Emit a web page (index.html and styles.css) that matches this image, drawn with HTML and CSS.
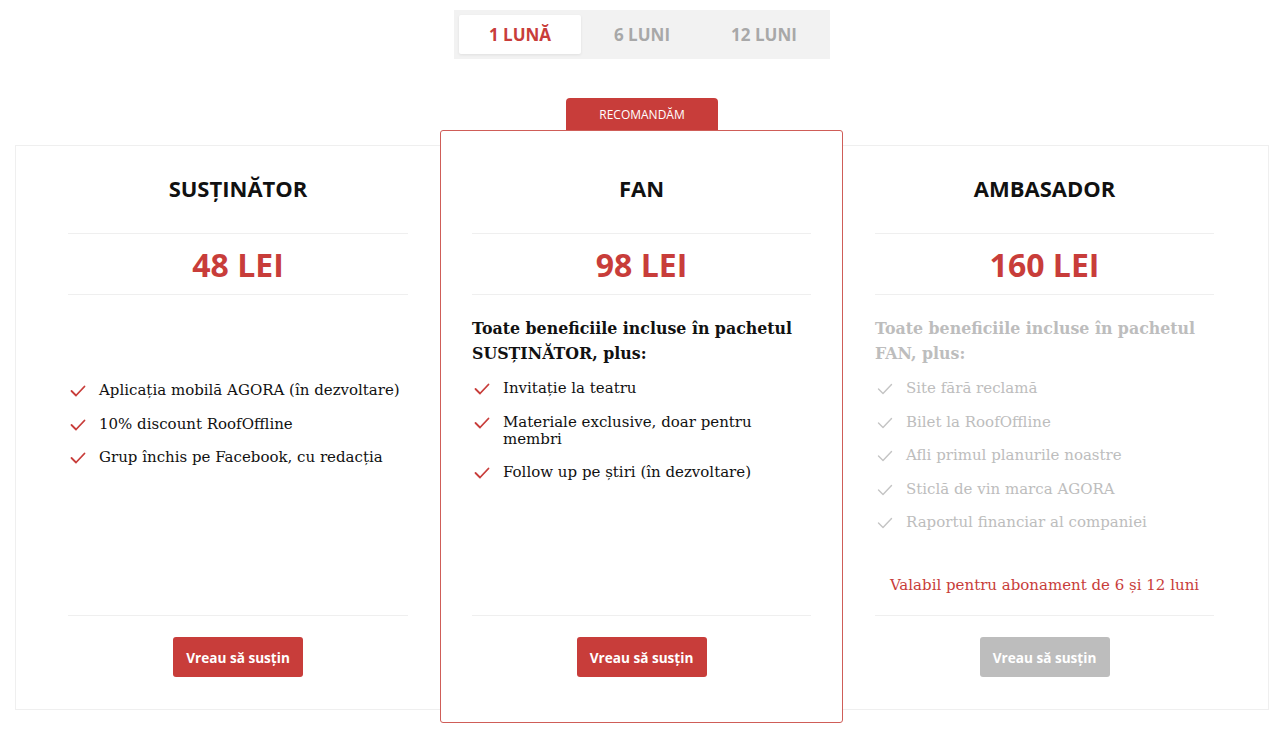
FILE: index.html
```html
<!DOCTYPE html>
<html lang="ro">
<head>
<meta charset="utf-8">
<title>Abonamente</title>
<link rel="stylesheet" href="styles.css">
</head>
<body>
<div class="tabs-wrap">
  <div class="tabs">
    <div class="tab active">1 LUNĂ</div>
    <div class="tab">6 LUNI</div>
    <div class="tab">12 LUNI</div>
  </div>
</div>

<div class="plans">
  <div class="card">
    <h2 class="title">SUSȚINĂTOR</h2>
    <div class="price">48 LEI</div>
    <div class="body">
      <ul class="list list-plain">
        <li><svg class="check" viewBox="0 0 16 12"><polyline points="1.5,6 6,10.5 14.5,1.5"/></svg>Aplicația mobilă AGORA (în dezvoltare)</li>
        <li><svg class="check" viewBox="0 0 16 12"><polyline points="1.5,6 6,10.5 14.5,1.5"/></svg>10% discount RoofOffline</li>
        <li><svg class="check" viewBox="0 0 16 12"><polyline points="1.5,6 6,10.5 14.5,1.5"/></svg>Grup închis pe Facebook, cu redacția</li>
      </ul>
    </div>
    <div class="foot"><button class="btn">Vreau să susțin</button></div>
  </div>

  <div class="card featured">
    <div class="badge">RECOMANDĂM</div>
    <h2 class="title">FAN</h2>
    <div class="price">98 LEI</div>
    <div class="body">
      <p class="intro">Toate beneficiile incluse în pachetul SUSȚINĂTOR, plus:</p>
      <ul class="list">
        <li><svg class="check" viewBox="0 0 16 12"><polyline points="1.5,6 6,10.5 14.5,1.5"/></svg>Invitație la teatru</li>
        <li><svg class="check" viewBox="0 0 16 12"><polyline points="1.5,6 6,10.5 14.5,1.5"/></svg>Materiale exclusive, doar pentru membri</li>
        <li><svg class="check" viewBox="0 0 16 12"><polyline points="1.5,6 6,10.5 14.5,1.5"/></svg>Follow up pe știri (în dezvoltare)</li>
      </ul>
    </div>
    <div class="foot"><button class="btn">Vreau să susțin</button></div>
  </div>

  <div class="card disabled">
    <h2 class="title">AMBASADOR</h2>
    <div class="price">160 LEI</div>
    <div class="body">
      <p class="intro">Toate beneficiile incluse în pachetul FAN, plus:</p>
      <ul class="list">
        <li><svg class="check" viewBox="0 0 16 12"><polyline points="1.5,6 6,10.5 14.5,1.5"/></svg>Site fără reclamă</li>
        <li><svg class="check" viewBox="0 0 16 12"><polyline points="1.5,6 6,10.5 14.5,1.5"/></svg>Bilet la RoofOffline</li>
        <li><svg class="check" viewBox="0 0 16 12"><polyline points="1.5,6 6,10.5 14.5,1.5"/></svg>Afli primul planurile noastre</li>
        <li><svg class="check" viewBox="0 0 16 12"><polyline points="1.5,6 6,10.5 14.5,1.5"/></svg>Sticlă de vin marca AGORA</li>
        <li><svg class="check" viewBox="0 0 16 12"><polyline points="1.5,6 6,10.5 14.5,1.5"/></svg>Raportul financiar al companiei</li>
      </ul>
      <p class="note">Valabil pentru abonament de 6 și 12 luni</p>
    </div>
    <div class="foot"><button class="btn btn-disabled">Vreau să susțin</button></div>
  </div>
</div>
</body>
</html>
```

FILE: styles.css
```css
* { box-sizing: border-box; }

html, body {
  min-height: 754px;
}

body {
  margin: 0;
  padding-bottom: 44px;
  background: #fff;
  font-family: "DejaVu Serif", "Liberation Serif", serif;
  color: #111;
}

.tabs-wrap {
  display: flex;
  justify-content: center;
  padding-top: 10px;
}

.tabs {
  display: flex;
  background: #f2f2f2;
  padding: 5px;
  width: 376px;
  height: 49px;
  margin-left: 4px;
}

.tab {
  width: 122px;
  height: 39px;
  display: flex;
  align-items: center;
  justify-content: center;
  font-family: "Open Sans", sans-serif;
  font-weight: 700;
  font-size: 17px;
  color: #a8a8a8;
}

.tab.active {
  background: #fff;
  color: #c83d3a;
  border-radius: 2px;
  box-shadow: 0 1px 3px rgba(0, 0, 0, 0.08);
}

.plans {
  margin: 86px 11px 0 15px;
  border: 1px solid #efefef;
  padding: 0 22px 0 20px;
  display: grid;
  grid-template-columns: 404px 403px 403px;
  align-items: start;
}

.card {
  position: relative;
  display: flex;
  flex-direction: column;
  padding: 28px 32px 32px;
  height: 563px;
}

.card.featured {
  height: 593px;
  margin: -16px 0 -14px;
  padding: 43px 31px 45px;
  border: 1px solid #cf5d58;
  border-radius: 3px;
  background: #fff;
  z-index: 1;
}

.badge {
  position: absolute;
  top: -33px;
  left: 125px;
  width: 152px;
  height: 32px;
  background: #c83d3a;
  color: #fff;
  border-radius: 4px 4px 0 0;
  font-family: "Open Sans", sans-serif;
  font-size: 12px;
  display: flex;
  align-items: center;
  justify-content: center;
}

.title {
  margin: 0;
  padding-bottom: 30px;
  border-bottom: 1px solid #efefef;
  font-family: "Open Sans", sans-serif;
  font-weight: 700;
  font-size: 22px;
  line-height: 29px;
  text-align: center;
  color: #111;
}

.price {
  height: 61px;
  line-height: 61px;
  border-bottom: 1px solid #efefef;
  font-family: "Open Sans", sans-serif;
  font-weight: 700;
  font-size: 32px;
  text-align: center;
  color: #c83d3a;
}

.body {
  flex: 1;
  display: flex;
  flex-direction: column;
  padding: 21px 0 17px;
  border-bottom: 1px solid #efefef;
}

.intro {
  margin: 0 0 14px;
  font-weight: 700;
  font-size: 15.8px;
  line-height: 25px;
  color: #111;
}

.list {
  list-style: none;
  margin: 0;
  padding: 0;
}

.list-plain {
  margin-top: 66px;
}

.list li {
  position: relative;
  padding-left: 31px;
  font-size: 15px;
  line-height: 17px;
  margin-bottom: 16.5px;
  color: #111;
}

.check {
  position: absolute;
  left: 2px;
  top: 3px;
  width: 16px;
  height: 12px;
  fill: none;
  stroke: #c83d3a;
  stroke-width: 1.8;
  stroke-linecap: round;
  stroke-linejoin: round;
}

.note {
  margin: auto 0 0;
  text-align: center;
  font-size: 15px;
  line-height: 25px;
  color: #c83d3a;
}

.disabled .intro,
.disabled .list li {
  color: #bdbdbd;
}

.disabled .check {
  stroke: #c4c4c4;
  stroke-width: 1.4;
}

.foot {
  display: flex;
  justify-content: center;
  padding-top: 21px;
}

.btn {
  width: 130px;
  height: 40px;
  border: none;
  border-radius: 3px;
  background: #c83d3a;
  color: #fff;
  font-family: "Open Sans", sans-serif;
  font-weight: 700;
  font-size: 13.6px;
  padding: 0;
}

.btn-disabled {
  background: #bdbdbd;
}
```
